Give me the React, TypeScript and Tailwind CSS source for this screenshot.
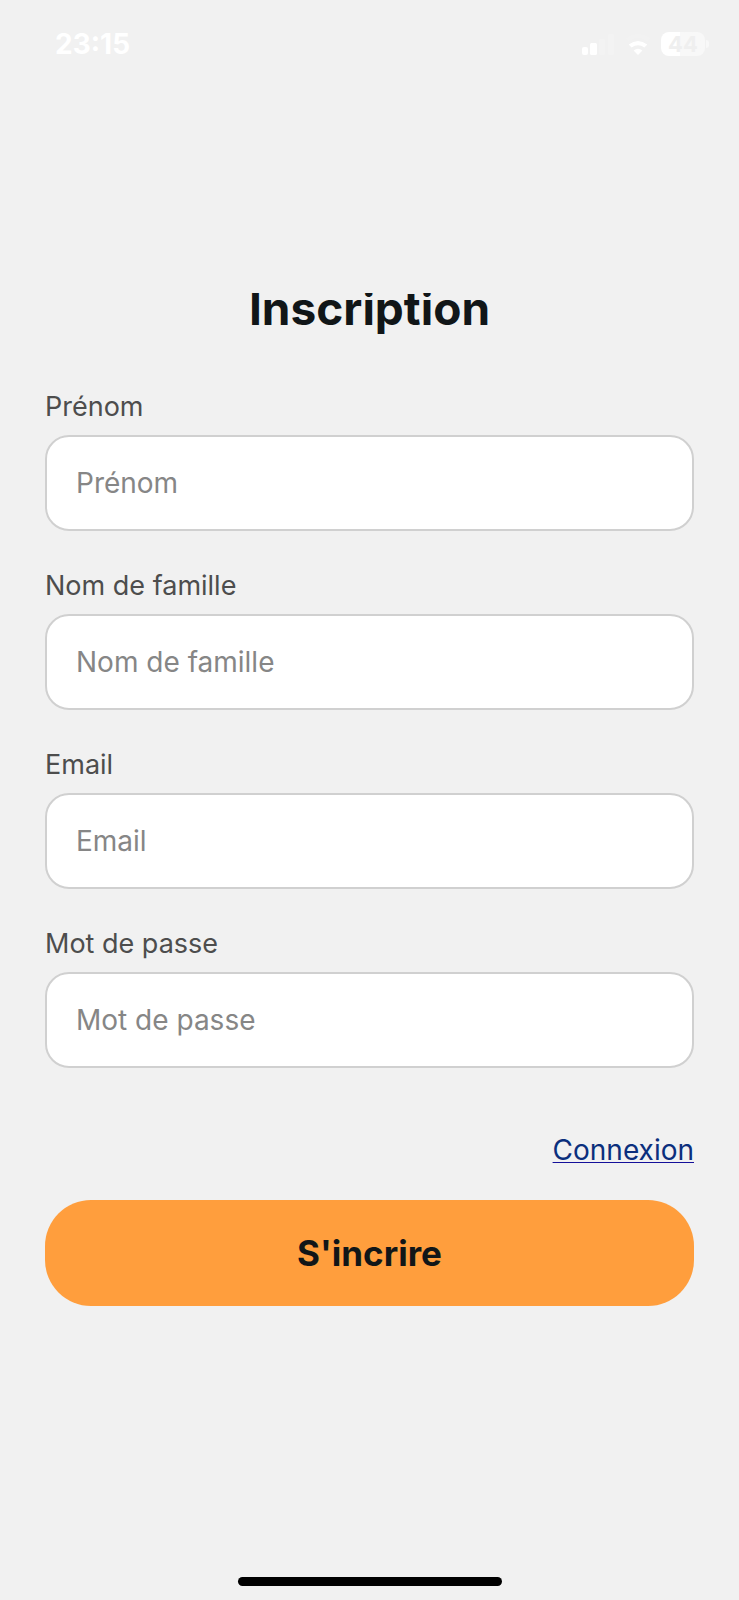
type FieldProps = {
  id: string;
  label: string;
  type?: string;
};

function Field({ id, label, type = "text" }: FieldProps) {
  return (
    <div className="flex flex-col gap-[10px]">
      <label htmlFor={id} className="text-[27px] leading-[36px] text-[#4d4d4d]">
        {label}
      </label>
      <input
        id={id}
        type={type}
        placeholder={label}
        className="h-24 w-full rounded-3xl border-2 border-[#d0d0d0] bg-white px-[29px] text-[28px] text-[#111618] outline-none placeholder:text-[#868686]"
      />
    </div>
  );
}

function StatusBar() {
  return (
    <header className="flex h-[88px] items-center justify-between pr-[30px] pl-[55px] text-white">
      <span className="text-[28px] leading-[36px] font-bold">23:15</span>
      <div className="flex items-center gap-[8px]">
        <svg width="34" height="24" viewBox="0 0 34 24" aria-hidden="true">
          <rect x="1" y="15" width="6" height="8" rx="2" fill="#fff" />
          <rect x="9" y="11" width="7" height="12" rx="1.5" fill="#fff" />
          <rect x="18" y="7" width="6" height="16" rx="1.5" fill="#f3f3f3" />
          <rect x="27" y="2" width="6" height="21" rx="1.5" fill="#f3f3f3" />
        </svg>
        <svg width="30" height="24" viewBox="0 0 30 24" aria-hidden="true">
          <path d="M3 6.5Q15-2.5 27 6.5L24.5 9Q15 2.5 5.5 9Z" fill="#f2f2f2" />
          <path d="M5.7 12.5Q15 5.5 24.3 12.5L21.4 15.5Q15 10.9 8.6 15.5Z" fill="#fff" />
          <path d="M10.6 18.4Q15 15.3 19.4 18.4L15 23Z" fill="#fff" />
        </svg>
        <div className="flex items-center gap-px">
          <div className="flex h-[24px] w-[44px] items-center justify-center rounded-lg bg-linear-to-r from-white from-43% to-[#f8f8f8] to-43% text-[22px] leading-[24px] font-bold text-[#efefef]">
            44
          </div>
          <div className="h-[8px] w-[3px] rounded-r-full bg-[#f8f8f8]" />
        </div>
      </div>
    </header>
  );
}

export default function App() {
  return (
    <div className="flex min-h-screen flex-col bg-[#f1f1f1] font-['Inter','Liberation_Sans',sans-serif]">
      <StatusBar />
      <main className="flex flex-1 flex-col px-[45px] pt-[205px]">
        <h1 className="h-[48px] overflow-hidden text-center text-[46px] leading-[30px] font-bold text-[#111618]">
          Inscription
        </h1>
        <form className="mt-12 flex flex-col" onSubmit={(e) => e.preventDefault()}>
          <div className="flex flex-col gap-[37px]">
            <Field id="prenom" label="Prénom" />
            <Field id="nom" label="Nom de famille" />
            <Field id="email" label="Email" type="email" />
            <Field id="mot-de-passe" label="Mot de passe" type="password" />
          </div>
          <a
            href="#connexion"
            className="mt-16 self-end text-[28px] leading-[36px] text-[#0b2f7d] underline decoration-[#14109a] decoration-1 underline-offset-2"
          >
            Connexion
          </a>
          <button
            type="submit"
            className="mt-8 h-[106px] w-full rounded-[46px] bg-[#ff9e3d] text-[35px] leading-[44px] font-bold text-[#111618]"
          >
            S'incrire
          </button>
        </form>
      </main>
      <footer className="flex justify-center pb-[14px]">
        <div className="h-[9px] w-[264px] rounded-full bg-black" />
      </footer>
    </div>
  );
}
